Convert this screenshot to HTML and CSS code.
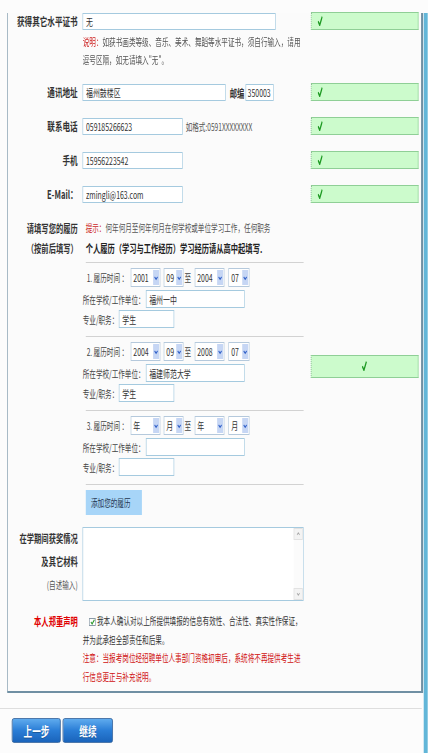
FILE: index.html
```html
<!DOCTYPE html>
<html lang="zh-CN">
<head>
<meta charset="utf-8">
<title>履历填写</title>
<link rel="stylesheet" href="styles.css">
</head>
<body>
<div class="frame">
<div class="page">
  <div class="panel">
    <div class="row r1">
      <div class="lbl">获得其它水平证书</div>
      <div class="fld">
        <input class="ipt w-cert" value="无">
        <p class="note"><span class="red">说明：</span>如获书画类等级、音乐、美术、舞蹈等水平证书，须自行输入，请用<br>逗号区隔，如无请填入"无"。</p>
      </div>
      <div class="msg"><svg class="ok" viewBox="0 0 8 10" width="8" height="10"><path d="M1 5.2 L3.4 9.2 L7.2 0.6" fill="none" stroke="#1f9a24" stroke-width="1.9"/></svg></div>
    </div>

    <div class="row r2">
      <div class="lbl">通讯地址</div>
      <div class="fld line">
        <input class="ipt w-addr" value="福州鼓楼区">
        <span class="lbl-in">邮编</span>
        <input class="ipt w-zip" value="350003">
      </div>
      <div class="msg"><svg class="ok" viewBox="0 0 8 10" width="8" height="10"><path d="M1 5.2 L3.4 9.2 L7.2 0.6" fill="none" stroke="#1f9a24" stroke-width="1.9"/></svg></div>
    </div>

    <div class="row r3">
      <div class="lbl">联系电话</div>
      <div class="fld line">
        <input class="ipt w-tel" value="059185266623">
        <span class="tip">如格式:0591XXXXXXXX</span>
      </div>
      <div class="msg"><svg class="ok" viewBox="0 0 8 10" width="8" height="10"><path d="M1 5.2 L3.4 9.2 L7.2 0.6" fill="none" stroke="#1f9a24" stroke-width="1.9"/></svg></div>
    </div>

    <div class="row r3">
      <div class="lbl">手机</div>
      <div class="fld line">
        <input class="ipt w-tel" value="15956223542">
      </div>
      <div class="msg"><svg class="ok" viewBox="0 0 8 10" width="8" height="10"><path d="M1 5.2 L3.4 9.2 L7.2 0.6" fill="none" stroke="#1f9a24" stroke-width="1.9"/></svg></div>
    </div>

    <div class="row r3">
      <div class="lbl">E-Mail：</div>
      <div class="fld line">
        <input class="ipt w-tel" value="zmingli@163.com">
      </div>
      <div class="msg"><svg class="ok" viewBox="0 0 8 10" width="8" height="10"><path d="M1 5.2 L3.4 9.2 L7.2 0.6" fill="none" stroke="#1f9a24" stroke-width="1.9"/></svg></div>
    </div>

    <div class="row r6">
      <div class="lbl lbl-two">请填写您的履历<br>（按前后填写）</div>
      <div class="fld">
        <div class="hint"><span class="red">提示：</span>何年何月至何年何月在何学校或单位学习工作，任何职务</div>
        <div class="hint hint-b">个人履历（学习与工作经历）学习经历请从高中起填写.</div>
        <div class="sep sep-first"></div>

        <div class="entry">
          <div class="erow er-time">
            <span class="elbl">1. 履历时间 ：</span>
            <span class="sel s-yr"><span class="val">2001</span><span class="arr"><svg viewBox="0 0 10 10" width="9" height="10"><path d="M2.5 4 L5 6.5 L7.5 4" fill="none" stroke="#2f5fc8" stroke-width="1.6"/></svg></span></span>
            <span class="sel s-mo"><span class="val">09</span><span class="arr"><svg viewBox="0 0 10 10" width="9" height="10"><path d="M2.5 4 L5 6.5 L7.5 4" fill="none" stroke="#2f5fc8" stroke-width="1.6"/></svg></span></span>
            <span class="zhi">至</span>
            <span class="sel s-yr s-yr2"><span class="val">2004</span><span class="arr"><svg viewBox="0 0 10 10" width="9" height="10"><path d="M2.5 4 L5 6.5 L7.5 4" fill="none" stroke="#2f5fc8" stroke-width="1.6"/></svg></span></span>
            <span class="sel s-mo s-mo2"><span class="val">07</span><span class="arr"><svg viewBox="0 0 10 10" width="9" height="10"><path d="M2.5 4 L5 6.5 L7.5 4" fill="none" stroke="#2f5fc8" stroke-width="1.6"/></svg></span></span>
          </div>
          <div class="erow er-school"><span class="elbl2">所在学校/工作单位：</span><input class="ipt w-school" value="福州一中"></div>
          <div class="erow er-major"><span class="elbl2">专业/职务：</span><input class="ipt w-major" value="学生"></div>
        </div>
        <div class="sep"></div>

        <div class="entry">
          <div class="erow er-time">
            <span class="elbl">2. 履历时间 ：</span>
            <span class="sel s-yr"><span class="val">2004</span><span class="arr"><svg viewBox="0 0 10 10" width="9" height="10"><path d="M2.5 4 L5 6.5 L7.5 4" fill="none" stroke="#2f5fc8" stroke-width="1.6"/></svg></span></span>
            <span class="sel s-mo"><span class="val">09</span><span class="arr"><svg viewBox="0 0 10 10" width="9" height="10"><path d="M2.5 4 L5 6.5 L7.5 4" fill="none" stroke="#2f5fc8" stroke-width="1.6"/></svg></span></span>
            <span class="zhi">至</span>
            <span class="sel s-yr s-yr2"><span class="val">2008</span><span class="arr"><svg viewBox="0 0 10 10" width="9" height="10"><path d="M2.5 4 L5 6.5 L7.5 4" fill="none" stroke="#2f5fc8" stroke-width="1.6"/></svg></span></span>
            <span class="sel s-mo s-mo2"><span class="val">07</span><span class="arr"><svg viewBox="0 0 10 10" width="9" height="10"><path d="M2.5 4 L5 6.5 L7.5 4" fill="none" stroke="#2f5fc8" stroke-width="1.6"/></svg></span></span>
          </div>
          <div class="erow er-school"><span class="elbl2">所在学校/工作单位：</span><input class="ipt w-school" value="福建师范大学"></div>
          <div class="erow er-major"><span class="elbl2">专业/职务：</span><input class="ipt w-major" value="学生"></div>
        </div>
        <div class="sep"></div>

        <div class="entry">
          <div class="erow er-time">
            <span class="elbl">3. 履历时间 ：</span>
            <span class="sel s-yr"><span class="val">年</span><span class="arr"><svg viewBox="0 0 10 10" width="9" height="10"><path d="M2.5 4 L5 6.5 L7.5 4" fill="none" stroke="#2f5fc8" stroke-width="1.6"/></svg></span></span>
            <span class="sel s-mo"><span class="val">月</span><span class="arr"><svg viewBox="0 0 10 10" width="9" height="10"><path d="M2.5 4 L5 6.5 L7.5 4" fill="none" stroke="#2f5fc8" stroke-width="1.6"/></svg></span></span>
            <span class="zhi">至</span>
            <span class="sel s-yr s-yr2"><span class="val">年</span><span class="arr"><svg viewBox="0 0 10 10" width="9" height="10"><path d="M2.5 4 L5 6.5 L7.5 4" fill="none" stroke="#2f5fc8" stroke-width="1.6"/></svg></span></span>
            <span class="sel s-mo s-mo2"><span class="val">月</span><span class="arr"><svg viewBox="0 0 10 10" width="9" height="10"><path d="M2.5 4 L5 6.5 L7.5 4" fill="none" stroke="#2f5fc8" stroke-width="1.6"/></svg></span></span>
          </div>
          <div class="erow er-school"><span class="elbl2">所在学校/工作单位：</span><input class="ipt w-school" value=""></div>
          <div class="erow er-major"><span class="elbl2">专业/职务：</span><input class="ipt w-major" value=""></div>
        </div>
        <div class="sep"></div>

        <div class="addbtn">添加您的履历</div>
      </div>
      <div class="msgcol"><div class="msg msg-big"><svg class="ok" viewBox="0 0 8 10" width="8" height="10"><path d="M1 5.2 L3.4 9.2 L7.2 0.6" fill="none" stroke="#1f9a24" stroke-width="1.9"/></svg></div></div>
    </div>

    <div class="row r7">
      <div class="lbl lbl-ta">在学期间获奖情况<br>及其它材料<br><span class="self">(自述输入)</span></div>
      <div class="fld">
        <div class="tarea">
          <textarea></textarea>
          <div class="sbar">
            <span class="sbtn"><svg viewBox="0 0 10 10" width="8" height="8"><path d="M2.5 6 L5 3.5 L7.5 6" fill="none" stroke="#a8a8a8" stroke-width="1.3"/></svg></span>
            <span class="sbtn"><svg viewBox="0 0 10 10" width="8" height="8"><path d="M2.5 4 L5 6.5 L7.5 4" fill="none" stroke="#a8a8a8" stroke-width="1.3"/></svg></span>
          </div>
        </div>
      </div>
    </div>

    <div class="row r8">
      <div class="lbl lbl-decl">本人郑重声明</div>
      <div class="fld decl"><span class="cb"><svg viewBox="0 0 10 10" width="10" height="8" preserveAspectRatio="none"><path d="M2 5 L4.2 7.5 L8.2 2.2" fill="none" stroke="#2a9a2a" stroke-width="1.6"/></svg></span>我本人确认对以上所提供填报的信息有效性、合法性、真实性作保证，<br>并为此承担全部责任和后果。<br><span class="warn">注意：当报考岗位经招聘单位人事部门资格初审后，系统将不再提供考生进<br>行信息更正与补充说明。</span></div>
    </div>
  </div>

  <div class="bsep"></div>
  <div class="btns">
    <button class="btn btn-prev">上一步</button>
    <button class="btn btn-next">继续</button>
  </div>
</div>
</div>
</body>
</html>
```
FILE: styles.css
```css
* { box-sizing: border-box; }
html, body {
  margin: 0;
  padding: 0;
  overflow: hidden;
  background: #fcfcfc;
}
body {
  font-family: "Noto Sans CJK SC", "Liberation Sans", sans-serif;
  font-size: 10px;
  color: #333;
}
.frame {
  width: 428px;
  height: 753px;
  overflow: hidden;
}
/* the whole page is laid out wide and condensed horizontally */
.page {
  width: 648px;
  min-height: 753px;
  border-right: 6px solid #62b6d8;
  background: #fcfcfc;
  transform: scaleX(0.66);
  transform-origin: 0 0;
}
.panel {
  margin-left: 10.6px;
  width: 630.4px;
  border-left: 1.5px solid #7d98aa;
  border-right: 3px solid #6f8fa3;
  border-bottom: 2px solid #6f8fa3;
  padding-bottom: 5px;
  background: #fbfbfb;
}
.row {
  display: grid;
  grid-template-columns: 113.7px 345.4px 163.6px;
  align-items: start;
}
.r1 { margin-top: 13px; }
.r2 { margin-top: 15px; }
.r3 { margin-top: 17px; }
.r6 { margin-top: 15px; }
.r7 { margin-top: 12px; }
.r8 { margin-top: 11px; }

.lbl {
  text-align: right;
  padding-right: 7.6px;
  font-weight: 700;
  font-size: 11.5px;
  line-height: 17px;
  color: #333;
  white-space: nowrap;
}
.lbl-two { line-height: 20px; font-size: 11px; }
.lbl-ta { line-height: 23px; font-size: 11px; }
.lbl-ta .self { font-weight: 400; font-size: 10px; color: #555; }
.lbl-decl { line-height: 18.5px; color: #e00000; font-size: 11px; }

.red { color: #cc1f1f; }

.fld { min-width: 0; }
.line { display: flex; align-items: center; height: 17px; }

.ipt {
  display: block;
  height: 17px;
  margin: 0;
  border: 1px solid #a5cadf;
  border-left-width: 1.5px;
  border-right-width: 1.5px;
  background: #fff;
  font-family: "Noto Sans CJK SC", "Liberation Sans", sans-serif;
  font-size: 10.5px;
  line-height: 15px;
  color: #333;
  padding: 0 4px;
  outline: none;
}
.w-cert { width: 292.4px; }
.w-addr { width: 216.7px; }
.w-zip { width: 42.5px; padding: 0 2px; }
.w-tel { width: 151.5px; }
.w-school { width: 150px; margin-left: 1.8px; }
.w-major { width: 83.3px; margin-left: 1px; }

.lbl-in {
  margin-left: 6px;
  margin-right: 2.2px;
  font-weight: 700;
  font-size: 11px;
  color: #333;
}
.tip { margin-left: 4.5px; color: #555; font-size: 10px; }

.note {
  margin: 3px 0 0;
  line-height: 18px;
  font-size: 10px;
  color: #555;
  white-space: nowrap;
}

.msg {
  display: flex;
  align-items: center;
  height: 18px;
  margin-top: -1px;
  border: 1px solid #8fcf96;
  border-left: 1.5px dotted #8fb898;
  border-right-width: 1.5px;
  background: #ccfbcc;
  padding-left: 9px;
}
.ok { display: block; }
.msgcol { min-width: 0; }
.msg-big {
  height: 22.7px;
  margin-top: 137px;
  padding-left: 0;
  justify-content: center;
}

.hint {
  padding-left: 4.5px;
  line-height: 20px;
  font-size: 10px;
  color: #555;
  white-space: nowrap;
}
.hint-b { font-weight: 700; font-size: 11px; color: #222; }

.sep {
  margin-left: 4.5px;
  width: 330.3px;
  height: 1px;
  background: #d2d2d2;
}
.sep-first { margin-top: 4px; }

.entry { padding: 5px 0 8px; }
.erow {
  display: flex;
  align-items: center;
  color: #444;
  font-size: 10px;
  white-space: nowrap;
}
.er-time { height: 19px; }
.er-school { height: 18px; margin-top: 3px; }
.er-major { height: 18px; margin-top: 2px; }
.er-school .ipt, .er-major .ipt { height: 18px; }

.elbl {
  display: inline-block;
  width: 72.7px;
  padding-left: 6px;
}
.zhi { margin: 0 5.2px 0 1.4px; }

.sel {
  display: inline-flex;
  align-items: stretch;
  height: 19px;
  border: 1px solid #b5c9dc;
  border-left-width: 1.5px;
  border-right-width: 1.5px;
  background: #fff;
}
.sel .val {
  flex: 1;
  padding-left: 3px;
  line-height: 17px;
  font-size: 10.5px;
  color: #333;
}
.sel .arr {
  width: 9.5px;
  margin: 1px;
  background: #c6d6f4;
  display: flex;
  align-items: center;
  justify-content: center;
}
.s-yr { width: 45.4px; margin-right: 4.6px; }
.s-mo { width: 30.3px; }
.s-yr2 { margin-right: 6px; }
.s-mo2 { width: 31.8px; }

.addbtn {
  margin: 5px 0 0 4.5px;
  width: 85px;
  height: 25px;
  background: #a7d5f8;
  color: #1f3550;
  font-size: 10px;
  line-height: 25px;
  padding-left: 8px;
}

.tarea {
  display: flex;
  width: 334.8px;
  height: 74px;
  border: 1px solid #a5cadf;
  border-left-width: 1.5px;
  border-right-width: 1.5px;
  background: #fff;
}
.tarea textarea {
  flex: 1;
  border: 0;
  margin: 0;
  resize: none;
  outline: none;
  background: transparent;
}
.sbar {
  width: 13.6px;
  display: flex;
  flex-direction: column;
  justify-content: space-between;
  background: #fbfbfb;
}
.sbtn {
  height: 12px;
  display: flex;
  align-items: center;
  justify-content: center;
  background: #f3f3f3;
  border: 1px solid #e2e2e2;
}

.decl {
  line-height: 18.5px;
  font-size: 10px;
  color: #333;
  white-space: nowrap;
}
.cb {
  display: inline-flex;
  align-items: center;
  justify-content: center;
  width: 10.6px;
  height: 8px;
  margin: 0 1.6px 0 9.5px;
  border: 1px solid #8a9aa8;
  background: #fff;
  vertical-align: -1px;
}
.warn { color: #d01010; }

.bsep {
  margin-top: 15px;
  width: 639px;
  height: 1px;
  background: #dedede;
}
.btns {
  display: flex;
  gap: 3px;
  margin: 9px 0 0 18.2px;
}
.btn {
  height: 25px;
  padding: 0;
  border: 1px solid #285c9a;
  border-radius: 3px;
  background: linear-gradient(#5fabee, #2a7dd6 50%, #1a64bb);
  color: #fff;
  font-family: "Noto Sans CJK SC", "Liberation Sans", sans-serif;
  font-weight: 700;
  font-size: 13px;
  line-height: 23px;
  text-shadow: 0 1px 0 rgba(0,0,0,0.25);
}
.btn-prev { width: 74.2px; }
.btn-next { width: 75.7px; }
```
